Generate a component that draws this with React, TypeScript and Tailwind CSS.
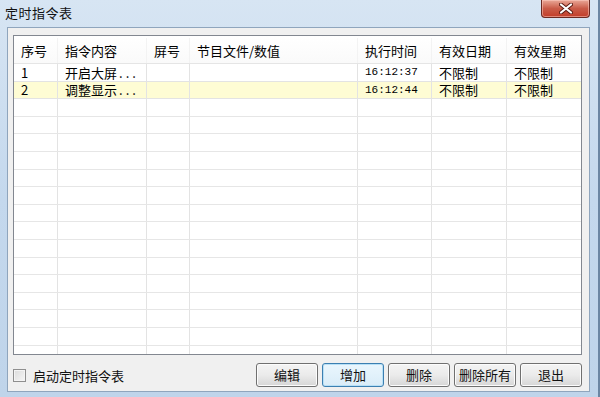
import React from "react";

const cols = ["序号", "指令内容", "屏号", "节目文件/数值", "执行时间", "有效日期", "有效星期"];

type Row = { no: string; cmd: string; time: string; date: string; week: string; hl?: boolean };
const rows: Row[] = [
  { no: "1", cmd: "开启大屏", time: "16:12:37", date: "不限制", week: "不限制" },
  { no: "2", cmd: "调整显示", time: "16:12:44", date: "不限制", week: "不限制", hl: true },
];

const gridCols = "grid grid-cols-[44px_89px_43px_168px_74px_75px_1fr]";

function Cell({ children, last, mono }: { children?: React.ReactNode; last?: boolean; mono?: boolean }) {
  return (
    <div
      className={
        "flex items-center pl-[7px] overflow-hidden whitespace-nowrap " +
        (last ? "" : "border-r border-[#e3e3e3] ") +
        (mono ? "font-['Liberation_Mono',monospace] text-[11px]" : "")
      }
    >
      {children}
    </div>
  );
}

function Btn({ label, focused }: { label: string; focused?: boolean }) {
  return (
    <div
      className={
        "w-[62px] h-[24px] flex items-center justify-center rounded-[3px] border text-[13px] text-[#111] " +
        (focused
          ? "border-[#3c7fb1] bg-gradient-to-b from-[#eaf6fd] to-[#d9ecf8] shadow-[inset_0_0_0_1px_#b8e0f6]"
          : "border-[#707070] bg-gradient-to-b from-[#f4f4f4] via-[#ebebeb] to-[#d6d6d6] shadow-[inset_0_0_0_1px_#fcfcfc]")
      }
    >
      {label}
    </div>
  );
}

export default function App() {
  const emptyRows = Array.from({ length: 16 });
  return (
    <div className="w-[600px] h-[397px] overflow-hidden flex flex-col bg-gradient-to-b from-[#d7e5f3] via-[#c4d8ed] to-[#bfd4ea] font-['Noto_Sans_CJK_SC','Noto_Sans',sans-serif] text-[#000] border-r-2 border-[#6c86a3]">
      {/* title bar */}
      <div className="h-[27px] flex items-start justify-between shrink-0">
        <div className="pl-[5px] pt-[3px] text-[13px] tracking-[0.5px] text-[#111]">定时指令表</div>
        <div className="mr-[8px] w-[49px] h-[18px] rounded-b-[4px] border border-t-0 border-[#6b2a22] bg-gradient-to-b from-[#e9a898] via-[#c95b48] to-[#c23c28] flex items-center justify-center shadow-[inset_0_0_0_1px_rgba(255,210,200,0.5)]">
          <svg width="14" height="11" viewBox="0 0 14 11">
            <path d="M2 1.5 L12 9.5 M12 1.5 L2 9.5" stroke="#5a1a12" strokeWidth="4" strokeLinecap="round" />
            <path d="M2 1.5 L12 9.5 M12 1.5 L2 9.5" stroke="#ffffff" strokeWidth="2.2" strokeLinecap="round" />
          </svg>
        </div>
      </div>

      {/* client area */}
      <div className="ml-[7px] mr-[8px] border border-[#8fa5bd] bg-[#f0f0f0] flex flex-col pt-[7px] pl-[5px] pr-[7px] pb-[4px] shrink-0">
        {/* list view */}
        <div className="h-[320px] border border-[#828790] bg-white overflow-hidden flex flex-col text-[13px]">
          <div className={gridCols + " h-[28px] shrink-0 border-b border-[#e5e5e5] bg-gradient-to-b from-white to-[#fafafa] pt-[2px]"}>
            {cols.map((c, i) => (
              <div
                key={c}
                className={"flex items-center pl-[7px] whitespace-nowrap " + (i < cols.length - 1 ? "border-r border-[#f3f3f3]" : "")}
              >
                {c}
              </div>
            ))}
          </div>
          {rows.map((r) => (
            <div
              key={r.no}
              className={gridCols + " h-[17.6px] shrink-0 border-b border-[#e3e3e3] " + (r.hl ? "bg-[#fefcd4]" : "bg-white")}
            >
              <Cell>{r.no}</Cell>
              <Cell>
                {r.cmd}
                <span className="tracking-[3px] ml-[2px]">...</span>
              </Cell>
              <Cell />
              <Cell />
              <Cell mono>{r.time}</Cell>
              <Cell>{r.date}</Cell>
              <Cell last>{r.week}</Cell>
            </div>
          ))}
          {emptyRows.map((_, i) => (
            <div key={i} className={gridCols + " h-[17.6px] shrink-0 border-b border-[#e6e6e6]"}>
              <Cell />
              <Cell />
              <Cell />
              <Cell />
              <Cell />
              <Cell />
              <Cell last />
            </div>
          ))}
        </div>

        {/* bottom bar */}
        <div className="mt-[8px] h-[24px] flex items-center justify-between">
          <div className="flex items-center gap-[7px] pt-[1px]">
            <div className="w-[13px] h-[13px] border border-[#8f8f8f] bg-gradient-to-br from-[#dcdcdc] to-[#f6f6f6] shadow-[inset_0_0_0_1px_#f4f4f4]" />
            <span className="text-[13px] text-[#111]">启动定时指令表</span>
          </div>
          <div className="flex items-center gap-[4px]">
            <Btn label="编辑" />
            <Btn label="增加" focused />
            <Btn label="删除" />
            <Btn label="删除所有" />
            <Btn label="退出" />
          </div>
        </div>
      </div>
    </div>
  );
}
